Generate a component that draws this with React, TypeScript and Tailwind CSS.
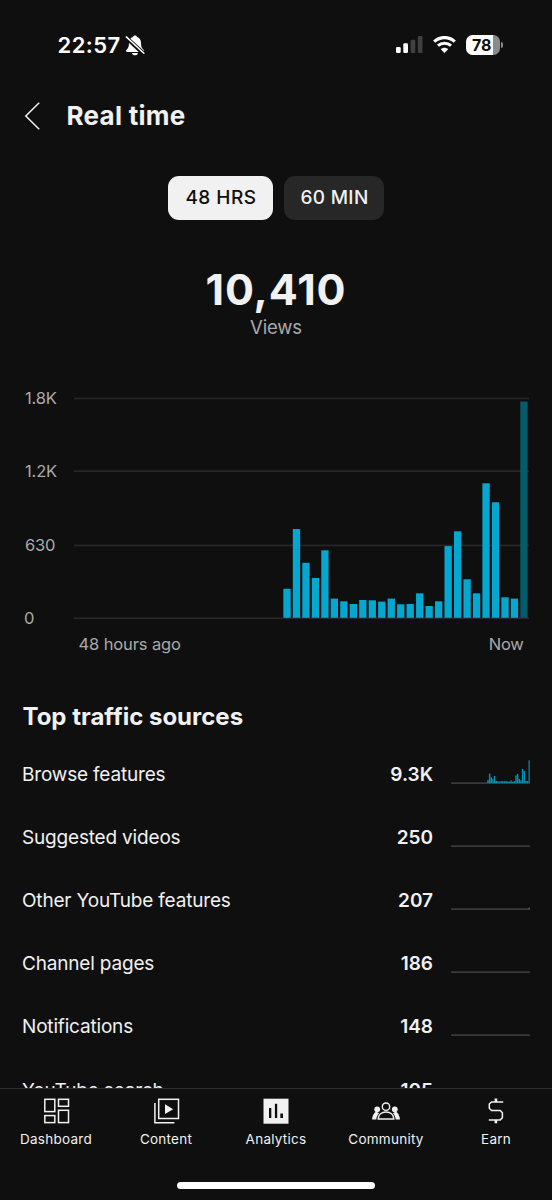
import type { ReactNode } from "react";

// Bar heights in px on the 220px tall chart. The last one is the hour in progress.
const HOURLY = [
  29, 88.8, 55, 39.8, 67.5, 19.2, 16.5, 13.8, 17.8, 17.5, 16.2, 19.2, 13.5, 13.8,
  24.5, 11.8, 16.5, 71.7, 86.5, 38.5, 24.5, 134.5, 115.5, 20.5, 19.2, 216.3,
];
const SLOTS = 48;

const SOURCES = [
  { name: "Browse features", value: "9.3K", spark: HOURLY },
  { name: "Suggested videos", value: "250", spark: [] },
  { name: "Other YouTube features", value: "207", spark: [13] },
  { name: "Channel pages", value: "186", spark: [] },
  { name: "Notifications", value: "148", spark: [] },
  { name: "YouTube search", value: "105", spark: [] },
];

function StatusBar() {
  return (
    <div className="flex h-[90px] shrink-0 items-center pr-[49px] pl-[57.5px] text-white">
      <span className="text-[22px] font-semibold tracking-[0.43px]">22:57</span>
      <svg className="ml-[4px]" width="20" height="21" viewBox="0 0 20 21" fill="currentColor">
        <path d="M10 .4c1.1 0 1.9.7 2.1 1.7 2.5.8 3.9 3 3.9 5.8 0 3.9.9 5.2 2.3 6.5.5.5.7.9.7 1.4 0 .7-.5 1.2-1.3 1.2H2.3c-.8 0-1.3-.5-1.3-1.2 0-.5.2-.9.7-1.4C3.1 13.1 4 11.8 4 7.9c0-2.8 1.4-5 3.9-5.8C8.1 1.1 8.9.4 10 .4Z" />
        <path d="M7 17.9h6c-.3 1.4-1.5 2.4-3 2.4s-2.7-1-3-2.4Z" />
        <path d="M.8 2.2 19.2 19.2" stroke="#0f0f0f" strokeWidth="4.2" />
        <path d="M1.3 1.9 18.9 18.2" stroke="currentColor" strokeWidth="1.5" strokeLinecap="round" />
      </svg>
      <div className="ml-auto flex items-center">
        <svg className="mt-[-1px]" width="27" height="17" viewBox="0 0 27 17">
          <rect x="0" y="11" width="4.7" height="6" rx="1.3" fill="#fff" />
          <rect x="7.3" y="7.3" width="4.7" height="9.7" rx="1.3" fill="#fff" />
          <rect x="14.6" y="3.7" width="4.7" height="13.3" rx="1.3" fill="#404040" />
          <rect x="21.8" y="0" width="4.7" height="17" rx="1.3" fill="#404040" />
        </svg>
        <svg className="mt-[-1px] ml-[10px]" width="23" height="17" viewBox="0 0 23 17" fill="none" stroke="#fff">
          <path d="M1.2 5.6C7 .2 16 .2 21.8 5.6" strokeWidth="3.2" />
          <path d="M5 9.7c3.7-3.4 9.3-3.4 13 0" strokeWidth="3" />
          <path d="M11.5 16.9 7.8 13.2c2.1-2 5.3-2 7.4 0Z" fill="#fff" stroke="none" />
        </svg>
        <div className="ml-[10px] flex items-center gap-[1px]">
          <div className="flex h-5 w-[34.5px] items-center overflow-hidden rounded-[6.5px] bg-linear-to-r from-white from-79% to-[#8a8a8a] to-79% pl-[6.5px] text-[16px] font-bold text-[#0f0f0f]">
            78
          </div>
          <div className="h-[6px] w-[2px] rounded-r-full bg-[#8a8a8a]" />
        </div>
      </div>
    </div>
  );
}

function Header() {
  return (
    <header className="flex h-[51px] shrink-0 items-center pl-[24px]">
      <svg width="16" height="28" viewBox="0 0 16 28" fill="none" stroke="#f1f1f1" strokeWidth="1.5">
        <path d="M15.2.8 1.8 14l13.4 13.2" />
      </svg>
      <h1 className="ml-[26.5px] text-[26px] font-bold tracking-[0.28px]">Real time</h1>
    </header>
  );
}

function ViewsChart() {
  const pitch = 455 / SLOTS;
  const first = SLOTS - HOURLY.length;

  return (
    <section className="mt-[59px]">
      <div className="flex h-[220px] pl-[24px]">
        <div className="-my-2.5 flex w-[49.5px] flex-col justify-between text-[16.5px] leading-5 tracking-[-0.15px] text-[#aaa]">
          <span className="pl-[1px]">1.8K</span>
          <span className="pl-[1px]">1.2K</span>
          <span className="pl-[1px]">630</span>
          <span>0</span>
        </div>
        <svg className="overflow-visible" width="455" height="220" viewBox="0 0 455 220">
          {[0, 72.7, 147, 219.8].map((y) => (
            <rect key={y} x="0" y={y - 0.4} width="455" height="1.7" fill="#272727" />
          ))}
          {HOURLY.map((h, i) => (
            <rect
              key={i}
              x={(first + i) * pitch + 0.8}
              y={219.8 - h}
              width="7.3"
              height={h}
              fill={i === HOURLY.length - 1 ? "#065b6b" : "#03a7d0"}
            />
          ))}
        </svg>
      </div>
      <div className="mt-[16.5px] flex h-5 items-center justify-between pr-[28.5px] pl-[78.5px] text-[16.5px] text-[#aaa]">
        <span className="tracking-[-0.12px]">48 hours ago</span>
        <span className="tracking-[-0.3px]">Now</span>
      </div>
    </section>
  );
}

function Sparkline({ bars }: { bars: number[] }) {
  const pitch = 79 / SLOTS;
  const first = SLOTS - bars.length;

  return (
    <svg className="mb-[7px] ml-[18px] shrink-0" width="79" height="24" viewBox="0 0 79 24">
      <rect x="0" y="22.5" width="79" height="1.2" fill="#4d4d4d" />
      {bars.map((h, i) => (
        <rect
          key={i}
          x={(first + i) * pitch + 0.1}
          y={23 - h * 0.105}
          width="1.4"
          height={h * 0.105}
          fill={first + i === SLOTS - 1 ? "#0a7c94" : "#0396ba"}
        />
      ))}
    </svg>
  );
}

function TrafficSources() {
  return (
    <section className="mt-[46px] px-[22px]">
      <h2 className="h-8 pl-[0.5px] text-[24px] leading-8 font-bold">Top traffic sources</h2>
      <ul className="mt-[11px]">
        {SOURCES.map((s) => (
          <li key={s.name} className="flex h-[63.15px] items-center text-[19px]">
            <span className="tracking-[-0.18px]">{s.name}</span>
            <span className="ml-auto font-semibold">{s.value}</span>
            <Sparkline bars={s.spark} />
          </li>
        ))}
      </ul>
    </section>
  );
}

function NavItem({ label, children }: { label: string; children: ReactNode }) {
  return (
    <div className="flex flex-1 flex-col items-center">
      <div className="flex h-[26px] items-center">{children}</div>
      <span className="mt-[5px] text-[13.5px] leading-5 tracking-[0.25px]">{label}</span>
    </div>
  );
}

function BottomNav() {
  return (
    <nav className="flex h-[112px] shrink-0 flex-col border-t border-[#2c2c2c] px-[1px] pt-[9px]">
      <div className="flex">
        <NavItem label="Dashboard">
          <svg className="ml-[1px]" width="26" height="26" viewBox="0 0 26 26" fill="none" stroke="#f1f1f1" strokeWidth="1.5">
            <rect x=".8" y="1.3" width="10" height="12.3" />
            <rect x=".8" y="17.6" width="10" height="7" />
            <rect x="14.5" y="1.3" width="10" height="7" />
            <rect x="14.5" y="12.3" width="10" height="12.3" />
          </svg>
        </NavItem>
        <NavItem label="Content">
          <svg className="ml-[1px]" width="26" height="26" viewBox="0 0 26 26" fill="none" stroke="#f1f1f1" strokeWidth="1.5">
            <rect x="4.7" y="1.3" width="19.8" height="19.2" />
            <path d="M.9 5v19.7h19.5" />
            <path d="M11 6.3v9.8l8.2-4.9Z" fill="#f1f1f1" stroke="none" />
          </svg>
        </NavItem>
        <NavItem label="Analytics">
          <svg width="26" height="26" viewBox="0 0 26 26">
            <rect x=".5" y=".7" width="25" height="25" fill="#f1f1f1" />
            <g fill="#0f0f0f">
              <rect x="6" y="10" width="2.3" height="10" />
              <rect x="11.9" y="5.8" width="2.3" height="14.2" />
              <rect x="17.3" y="15.5" width="2.7" height="4.5" />
            </g>
          </svg>
        </NavItem>
        <NavItem label="Community">
          <svg width="28" height="26" viewBox="0 0 28 26" fill="#f1f1f1">
            <circle cx="5.2" cy="11.3" r="2.9" />
            <circle cx="22.8" cy="11.3" r="2.9" />
            <path d="M4 13.5c-2.3 1.6-3.7 4.3-4 8h4.3c.3-2.6 1.2-4.7 2.9-6.2Z" />
            <path d="M24 13.5c2.3 1.6 3.7 4.3 4 8h-4.3c-.3-2.6-1.2-4.7-2.9-6.2Z" />
            <circle cx="14" cy="8.7" r="3.7" fill="none" stroke="#f1f1f1" strokeWidth="1.4" />
            <path
              d="M6.2 21c.3-4.3 3.4-7 7.8-7s7.5 2.7 7.8 7Z"
              fill="none"
              stroke="#f1f1f1"
              strokeWidth="1.4"
            />
          </svg>
        </NavItem>
        <NavItem label="Earn">
          <svg width="16" height="26" viewBox="0 0 16 26" fill="none" stroke="#f1f1f1" strokeWidth="1.5">
            <path d="M15.2 3.9H3.5L1.3 6v4.3l2.2 2.2h8.7l2.2 2.2v5l-2.2 2.2H.8" />
            <path d="M7.9.6v3.3M7.9 21.9v3.3" strokeWidth="2.6" />
          </svg>
        </NavItem>
      </div>
      <div className="mt-[33px] h-[7px] w-[198px] self-center rounded-full bg-white" />
    </nav>
  );
}

export default function App() {
  return (
    <div className="flex h-[1200px] w-full flex-col overflow-hidden bg-[#0f0f0f] font-['Inter',sans-serif] text-[#f1f1f1]">
      <StatusBar />
      <Header />
      <main className="min-h-0 flex-1 overflow-hidden">
        <div className="mt-[35px] flex justify-center gap-[11px] text-[19px] font-medium">
          <button className="h-[44px] w-[105px] rounded-[11px] bg-[#f1f1f1] pt-[1px] pl-[1px] tracking-[0.5px] text-[#0f0f0f]">
            48 HRS
          </button>
          <button className="h-[44px] w-[100px] rounded-[11px] bg-[#272727] pt-[1px] pl-[1px] tracking-[0.34px]">
            60 MIN
          </button>
        </div>
        <div className="mt-[43px] flex flex-col items-center">
          <p className="text-[43px] leading-[52px] font-bold tracking-[0.88px]">10,410</p>
          <p className="text-[18.5px] leading-6 tracking-[-0.15px] text-[#aaa]">Views</p>
        </div>
        <ViewsChart />
        <TrafficSources />
      </main>
      <BottomNav />
    </div>
  );
}
